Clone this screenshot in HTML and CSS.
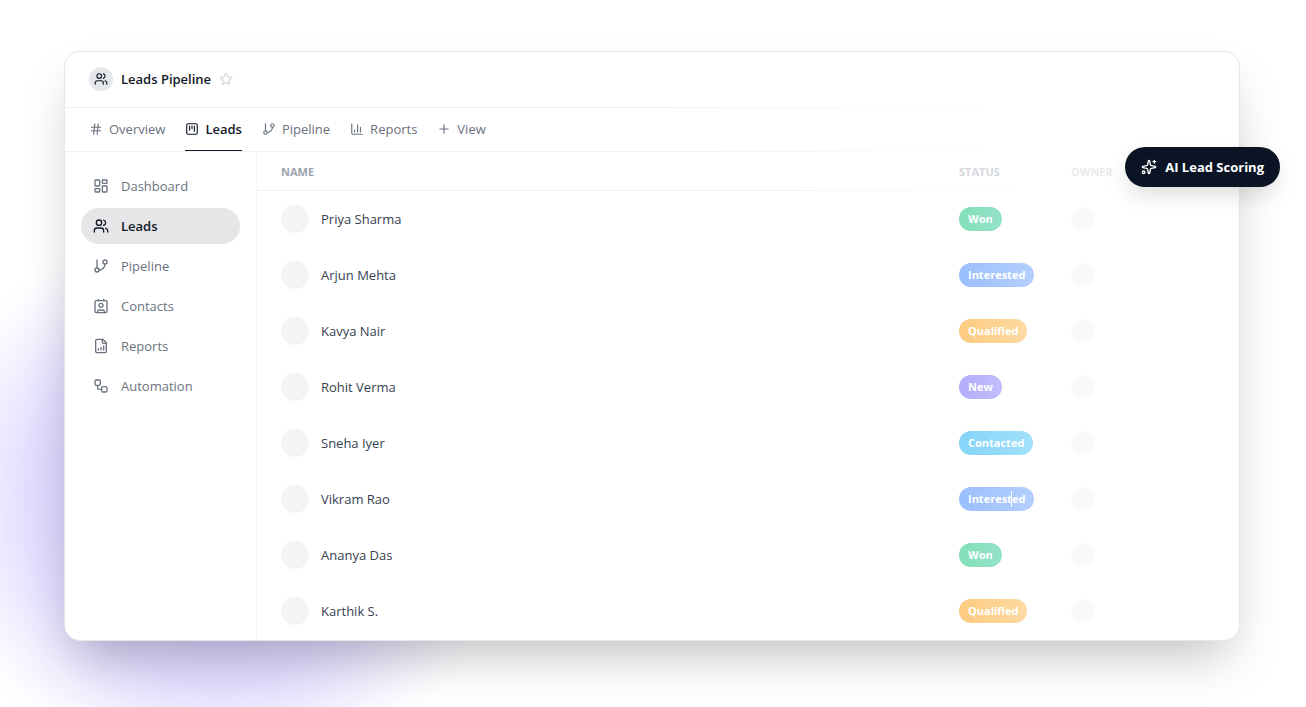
FILE: index.html
```html
<!DOCTYPE html>
<html lang="en">
<head>
<meta charset="utf-8">
<meta name="viewport" content="width=device-width, initial-scale=1">
<title>Leads Pipeline</title>
<link rel="stylesheet" href="styles.css">
</head>
<body>
<svg class="sprite" aria-hidden="true">
  <symbol id="users" viewBox="0 0 24 24"><path d="M16 21v-2a4 4 0 0 0-4-4H6a4 4 0 0 0-4 4v2"/><circle cx="9" cy="7" r="4"/><path d="M22 21v-2a4 4 0 0 0-3-3.870M16 3.130a4 4 0 0 1 0 7.750"/></symbol>
  <symbol id="star" viewBox="0 0 24 24"><path d="M12 2l3.090 6.260L22 9.270l-5 4.870 1.180 6.880L12 17.770l-6.180 3.250L7 14.140 2 9.270l6.910-1.010z"/></symbol>
  <symbol id="hash" viewBox="0 0 24 24"><path d="M4 9h16M4 15h16M10 3 8 21M16 3l-2 18"/></symbol>
  <symbol id="kanban" viewBox="0 0 24 24"><rect x="3" y="3" width="18" height="18" rx="2"/><path d="M8 7v7M12 7v4M16 7v9"/></symbol>
  <symbol id="branch" viewBox="0 0 24 24"><path d="M6 3v12"/><circle cx="18" cy="6" r="3"/><circle cx="6" cy="18" r="3"/><path d="M18 9a9 9 0 0 1-9 9"/></symbol>
  <symbol id="chart" viewBox="0 0 24 24"><path d="M3 3v16a2 2 0 0 0 2 2h16M8 17v-3M13 17V5M18 17V9"/></symbol>
  <symbol id="plus" viewBox="0 0 24 24"><path d="M5 12h14M12 5v14"/></symbol>
  <symbol id="dashboard" viewBox="0 0 24 24"><rect x="3" y="3" width="7" height="9" rx="1"/><rect x="14" y="3" width="7" height="5" rx="1"/><rect x="14" y="12" width="7" height="9" rx="1"/><rect x="3" y="16" width="7" height="5" rx="1"/></symbol>
  <symbol id="contact" viewBox="0 0 24 24"><path d="M16 2v2M8 2v2M7 22v-2a2 2 0 0 1 2-2h6a2 2 0 0 1 2 2v2"/><circle cx="12" cy="11" r="3"/><rect x="3" y="4" width="18" height="18" rx="2"/></symbol>
  <symbol id="report" viewBox="0 0 24 24"><path d="M15 2H6a2 2 0 0 0-2 2v16a2 2 0 0 0 2 2h12a2 2 0 0 0 2-2V7z"/><path d="M14 2v4a2 2 0 0 0 2 2h4M8 18v-2M12 18v-4M16 18v-6"/></symbol>
  <symbol id="workflow" viewBox="0 0 24 24"><rect x="3" y="3" width="8" height="8" rx="2"/><path d="M7 11v4a2 2 0 0 0 2 2h4"/><rect x="13" y="13" width="8" height="8" rx="2"/></symbol>
  <symbol id="sparkles" viewBox="0 0 24 24"><path d="M11.017 2.814a1 1 0 0 1 1.966 0l1.051 5.558a2 2 0 0 0 1.594 1.594l5.558 1.051a1 1 0 0 1 0 1.966l-5.558 1.051a2 2 0 0 0-1.594 1.594l-1.051 5.558a1 1 0 0 1-1.966 0l-1.051-5.558a2 2 0 0 0-1.594-1.594l-5.558-1.051a1 1 0 0 1 0-1.966l5.558-1.051a2 2 0 0 0 1.594-1.594z"/><path d="M20 2v4M22 4h-4"/><circle cx="4" cy="20" r="2"/></symbol>
</svg>
<main class="stage">
  <div class="glow"></div>
  <section class="panel">
    <header class="title-bar">
      <span class="title-icon"><svg class="icon small"><use href="#users"/></svg></span>
      <h1 class="title">Leads Pipeline</h1>
      <button class="star" aria-label="Add to favourites"><svg class="icon small"><use href="#star"/></svg></button>
    </header>
    <nav class="tabs" aria-label="Views">
      <a class="tab" href="#"><svg class="icon small"><use href="#hash"/></svg>Overview</a>
      <a class="tab current" href="#" aria-current="page"><svg class="icon small"><use href="#kanban"/></svg>Leads</a>
      <a class="tab" href="#"><svg class="icon small"><use href="#branch"/></svg>Pipeline</a>
      <a class="tab" href="#"><svg class="icon small"><use href="#chart"/></svg>Reports</a>
      <button class="tab"><svg class="icon small"><use href="#plus"/></svg>View</button>
    </nav>
    <div class="body">
      <nav class="sidebar" aria-label="Sections">
        <a class="side-link" href="#"><svg class="icon"><use href="#dashboard"/></svg>Dashboard</a>
        <a class="side-link current" href="#" aria-current="page"><svg class="icon"><use href="#users"/></svg>Leads</a>
        <a class="side-link" href="#"><svg class="icon"><use href="#branch"/></svg>Pipeline</a>
        <a class="side-link" href="#"><svg class="icon"><use href="#contact"/></svg>Contacts</a>
        <a class="side-link" href="#"><svg class="icon"><use href="#report"/></svg>Reports</a>
        <a class="side-link" href="#"><svg class="icon"><use href="#workflow"/></svg>Automation</a>
      </nav>
      <div class="content">
        <table class="leads">
          <thead>
            <tr><th class="col-name">Name</th><th class="col-status">Status</th><th class="col-owner">Owner</th><th class="col-end"></th></tr>
          </thead>
          <tbody>
            <tr><td class="col-name"><div class="person"><span class="avatar"></span>Priya Sharma</div></td><td><span class="badge won">Won</span></td><td><span class="owner"></span></td><td></td></tr>
            <tr><td class="col-name"><div class="person"><span class="avatar"></span>Arjun Mehta</div></td><td><span class="badge interested">Interested</span></td><td><span class="owner"></span></td><td></td></tr>
            <tr><td class="col-name"><div class="person"><span class="avatar"></span>Kavya Nair</div></td><td><span class="badge qualified">Qualified</span></td><td><span class="owner"></span></td><td></td></tr>
            <tr><td class="col-name"><div class="person"><span class="avatar"></span>Rohit Verma</div></td><td><span class="badge new">New</span></td><td><span class="owner"></span></td><td></td></tr>
            <tr><td class="col-name"><div class="person"><span class="avatar"></span>Sneha Iyer</div></td><td><span class="badge contacted">Contacted</span></td><td><span class="owner"></span></td><td></td></tr>
            <tr><td class="col-name"><div class="person"><span class="avatar"></span>Vikram Rao</div></td><td><span class="badge interested">Interested<span class="caret"></span></span></td><td><span class="owner"></span></td><td></td></tr>
            <tr><td class="col-name"><div class="person"><span class="avatar"></span>Ananya Das</div></td><td><span class="badge won">Won</span></td><td><span class="owner"></span></td><td></td></tr>
            <tr><td class="col-name"><div class="person"><span class="avatar"></span>Karthik S.</div></td><td><span class="badge qualified">Qualified</span></td><td><span class="owner"></span></td><td></td></tr>
          </tbody>
        </table>
      </div>
    </div>
    <button class="scoring"><svg class="icon"><use href="#sparkles"/></svg>AI Lead Scoring</button>
  </section>
</main>
</body>
</html>
```

FILE: styles.css
```css
* { box-sizing: border-box; }

body {
  margin: 0;
  background: #fff;
  color: #111827;
  font: 13px/20px "Segoe UI", "Open Sans", "Noto Sans", sans-serif;
}

a { color: inherit; text-decoration: none; }
button { border: 0; padding: 0; background: none; color: inherit; font: inherit; cursor: pointer; }

.sprite { position: absolute; width: 0; height: 0; }

.icon {
  flex: none;
  width: 16px;
  height: 16px;
  fill: none;
  stroke: currentColor;
  stroke-width: 2;
  stroke-linecap: round;
  stroke-linejoin: round;
}
.icon.small { width: 14px; height: 14px; }

.stage {
  position: relative;
  min-height: 100vh;
  padding: 51px 66px 66px 64px;
  overflow: hidden;
}

/* Soft violet light behind the lower left corner */
.glow {
  position: absolute;
  left: -80px;
  bottom: -80px;
  width: 600px;
  height: 580px;
  background: radial-gradient(closest-side, #d3cafe 0%, #d8d0fe 45%, #e4deff 65%, #f4f1ff 82%, #fcfbff 93%, transparent 100%);
}

.panel {
  position: relative;
  border: 1px solid #e5e7eb;
  border-radius: 16px;
  background: #fff;
  box-shadow: 0 25px 50px -12px rgba(0, 0, 0, 0.25);
}

.title-bar,
.tabs,
.leads thead {
  background: linear-gradient(90deg, #f1f2f4 50%, #fff 82%) bottom / 100% 1px no-repeat;
}

.title-bar {
  display: flex;
  align-items: center;
  gap: 8px;
  height: 56px;
  padding: 0 24px 2px;
}
.title-icon {
  display: grid;
  place-items: center;
  width: 24px;
  height: 24px;
  border-radius: 50%;
  background: #e5e7eb;
}
.title { margin: 0; font-size: 13px; font-weight: 600; }
.star { display: flex; color: #d1d5db; }

.tabs {
  display: flex;
  gap: 20px;
  height: 44px;
  padding: 0 24px 1px;
}
.tab {
  display: flex;
  align-items: center;
  gap: 6px;
  border-bottom: 1px solid transparent;
  color: #6b7280;
}
.tab.current { border-color: #111827; color: #111827; font-weight: 600; }

.body { display: flex; }

.sidebar {
  display: flex;
  flex: none;
  flex-direction: column;
  gap: 4px;
  width: 192px;
  padding: 16px;
  border-right: 1px solid #f6f7f8;
}
.side-link {
  display: flex;
  align-items: center;
  gap: 12px;
  height: 36px;
  padding: 0 12px;
  border-radius: 18px;
  color: #6b7280;
}
.side-link.current { background: #e6e6e8; color: #111827; font-weight: 600; }

.content { flex: 1; padding-bottom: 1px; }

.leads {
  width: 100%;
  border-collapse: collapse;
  table-layout: fixed;
}
.leads th {
  height: 39px;
  padding: 0;
  color: #9ca3af;
  font-size: 11px;
  font-weight: 700;
  text-align: left;
  text-transform: uppercase;
}
.leads td { height: 56px; padding: 0; color: #374151; }
.leads .col-name { padding-left: 24px; }
.leads .col-status { width: 112px; color: #d5d8dc; }
.leads .col-owner { width: 112px; color: #e9ebed; }
.leads .col-end { width: 56px; }

.person { display: flex; align-items: center; gap: 12px; }
.avatar { width: 28px; height: 28px; border-radius: 50%; background: #f3f4f6; }
.owner { display: block; width: 24px; height: 24px; border-radius: 50%; background: #f9fafa; }

.badge {
  position: relative;
  display: inline-block;
  padding: 2px 9px;
  border-radius: 12px;
  color: #fff;
  font-size: 11px;
  font-weight: 700;
  vertical-align: middle;
}
.won { background: linear-gradient(90deg, #83dfba, #94e3c8); }
.interested { background: linear-gradient(90deg, #9abffd, #b4cffe); }
.qualified { background: linear-gradient(90deg, #fdcb80, #fdd9a2); }
.new { background: linear-gradient(90deg, #b2acfb, #c3befc); }
.contacted { background: linear-gradient(90deg, #84d4f9, #a2e0fb); }

.caret {
  position: absolute;
  top: 4px;
  right: 22px;
  width: 1px;
  height: 16px;
  background: #fff;
}

.scoring {
  position: absolute;
  top: 95px;
  right: -41px;
  display: flex;
  align-items: center;
  gap: 8px;
  height: 40px;
  padding: 0 16px;
  border-radius: 20px;
  background: #0b1424;
  color: #fff;
  font-weight: 700;
  box-shadow: 0 10px 24px -4px rgba(0, 0, 0, 0.16);
}
```
